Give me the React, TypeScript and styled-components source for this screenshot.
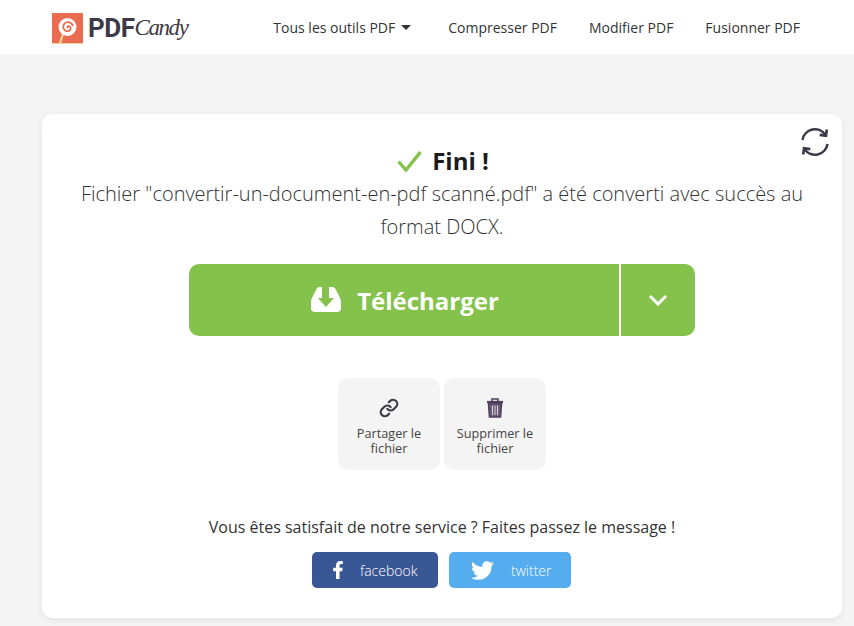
import React from "react";
import styled, { createGlobalStyle } from "styled-components";
import { FaFacebookF, FaTwitter } from "react-icons/fa";
import { Link } from "lucide-react";

const Global = createGlobalStyle`
  html, body { margin: 0; padding: 0; background: #f4f4f4; }
  body { font-family: "Open Sans", "Liberation Sans", sans-serif; color: #333; height: 626px; overflow: hidden; }
`;

const Header = styled.header`
  height: 54px; background: #fff; display: flex; align-items: center;
  padding: 0 54px 0 52px; box-sizing: border-box;
`;
const Logo = styled.div`display: flex; align-items: center; gap: 5px; height: 32px; margin-top: 2px;`;
const LogoBold = styled.span`font-family: Roboto, sans-serif; font-size: 26px; font-weight: 700; color: #3c3a47; letter-spacing: -0.5px; line-height: 32px;`;
const LogoScript = styled.span`font-family: "Liberation Serif", serif; font-style: italic; font-size: 23px; letter-spacing: -1.4px; color: #3c3a47; line-height: 32px; margin-left: -5px;`;
const Nav = styled.nav`margin-left: auto; margin-top: 2px; display: flex; align-items: center; gap: 32px;`;
const NavItem = styled.a`font-size: 14px; color: #333; line-height: 20px; display: flex; align-items: center; gap: 6px; white-space: nowrap;`;
const FirstNavItem = styled(NavItem)`margin-right: 5px;`;
const Caret = styled.span`width: 0; height: 0; border-left: 5px solid transparent; border-right: 5px solid transparent; border-top: 5px solid #333; margin-top: -1px;`;

const Page = styled.main`padding: 60px 12px 0 42px;`;
const Card = styled.section`
  position: relative; box-sizing: border-box; height: 504px; background: #fff; border-radius: 10px;
  box-shadow: 0 2px 7px rgba(0,0,0,.07); display: flex; flex-direction: column; align-items: center; padding-top: 31px;
`;
const Refresh = styled.div`position: absolute; top: 12px; right: 11px; width: 32px; height: 32px;`;
const Heading = styled.h1`margin: 0 0 0 2px; display: flex; align-items: center; gap: 10px; font-size: 24px; font-weight: 700; color: #1c1c1c; line-height: 32px;`;
const Message = styled.p`margin: 0; width: 760px; text-align: center; font-size: 20px; font-weight: 300; line-height: 33px; color: #333;`;
const DownloadRow = styled.div`display: flex; margin-top: 21px; width: 506px; height: 72px; background: #84c24b; border-radius: 10px; color: #fff;`;
const DownloadMain = styled.div`box-sizing: border-box; width: 432px; display: flex; align-items: center; justify-content: center; gap: 16px; font-size: 24px; font-weight: 700; border-right: 2px solid #fff; padding-left: 2px;`;
const DownloadMore = styled.div`flex: 1; display: flex; align-items: center; justify-content: center;`;
const Actions = styled.div`display: flex; gap: 4px; margin-top: 42px;`;
const Action = styled.div`
  box-sizing: border-box; width: 102px; height: 92px; background: #f4f4f4; border-radius: 10px;
  display: flex; flex-direction: column; align-items: center; padding-top: 19px; font-size: 12.7px; line-height: 15px; color: #444; text-align: center;
`;
const ActionIcon = styled.div`height: 21px; margin-bottom: 8px; display: flex; align-items: center; color: #3c3a47;`;
const Prompt = styled.p`margin: 46px 0 0; font-size: 16px; line-height: 22px; color: #333;`;
const Socials = styled.div`display: flex; gap: 11px; margin: 14px 1px 0 0;`;
const Social = styled.a<{ $bg: string; $w: number; $gap: number; $pad: number }>`
  box-sizing: border-box; width: ${p => p.$w}px; height: 36px; border-radius: 5px; background: ${p => p.$bg};
  color: #fff; font-size: 14px; font-weight: 300; display: flex; align-items: center; gap: ${p => p.$gap}px; padding-left: ${p => p.$pad}px;
`;

export default function App() {
  return (
    <>
      <Global />
      <Header>
        <Logo>
          <svg width="31" height="31" viewBox="0 0 31 31">
            <rect width="31" height="31" fill="#ea6c50" />
            <path d="M11 21 L8 30" stroke="#f7dfa0" strokeWidth="2" />
            <rect y="30" width="31" height="1" fill="#f3cf9a" />
            <circle cx="15.500" cy="14" r="9" fill="#fff" />
            <path d="M15.500 14.500a1.500 1.500 0 0 1 1.500-1.500 2.600 2.600 0 0 1 .2 4.800 4.300 4.300 0 0 1-6-3.800 4.600 4.600 0 0 1 4.600-4.800 5.800 5.800 0 0 1 5 3" fill="none" stroke="#ea6c50" strokeWidth="1.800" strokeLinecap="round" />
          </svg>
          <LogoBold>PDF</LogoBold>
          <LogoScript>Candy</LogoScript>
        </Logo>
        <Nav>
          <FirstNavItem>Tous les outils PDF <Caret /></FirstNavItem>
          <NavItem>Compresser PDF</NavItem>
          <NavItem>Modifier PDF</NavItem>
          <NavItem>Fusionner PDF</NavItem>
        </Nav>
      </Header>
      <Page>
        <Card>
          <Refresh>
            <svg width="32" height="32" viewBox="0 0 32 32" fill="none" stroke="#3c3a47" strokeWidth="2.600">
              <path d="M3.500 14a12.600 12.600 0 0 1 23-5" />
              <path d="M27.800 3.500 27 9.800l-6.300-.9" />
              <path d="M28.500 18a12.600 12.600 0 0 1-23 5" />
              <path d="M4.200 28.500l.8-6.300 6.300.9" />
            </svg>
          </Refresh>
          <Heading>
            <svg width="25" height="22" viewBox="0 0 25 22"><path d="M1.500 11.500 9 20 23.500 2" fill="none" stroke="#84c24b" strokeWidth="3.400" /></svg>
            Fini !
          </Heading>
          <Message>Fichier "convertir-un-document-en-pdf scanné.pdf" a été converti avec succès au format DOCX.</Message>
          <DownloadRow>
            <DownloadMain>
              <svg width="30" height="26" viewBox="0 0 30 26">
                <path d="M5 3Q6 0 9 0H11V11H7L15 20 23 11H18V0H21Q24 0 25 3L29 11Q30 13 30 15V21Q30 25 26 25H4Q0 25 0 21V15Q0 13 1 11Z" fill="#fff" />
              </svg>
              Télécharger
            </DownloadMain>
            <DownloadMore>
              <svg width="20" height="12" viewBox="0 0 20 12"><path d="M2 2l8 8 8-8" fill="none" stroke="#fff" strokeWidth="3" /></svg>
            </DownloadMore>
          </DownloadRow>
          <Actions>
            <Action>
              <ActionIcon><Link size={20} strokeWidth={2.6} /></ActionIcon>
              Partager le fichier
            </Action>
            <Action>
              <ActionIcon>
                <svg width="18" height="20" viewBox="0 0 18 20" fill="none" stroke="#4f3f5c" strokeWidth="1.600">
                  <path d="M1 4h16" strokeWidth="2.200" />
                  <path d="M6 3.500V1h6v2.500" />
                  <path d="M2.500 5.500l1 13.500h11l1-13.500z" fill="#6a5a76" />
                  <path d="M6.500 7.500v9.500M9 7.500v9.500M11.500 7.500v9.500" stroke="#dcd8de" strokeWidth="1" />
                </svg>
              </ActionIcon>
              Supprimer le fichier
            </Action>
          </Actions>
          <Prompt>Vous êtes satisfait de notre service ? Faites passez le message !</Prompt>
          <Socials>
            <Social $bg="#3a5795" $w={126} $gap={13} $pad={17}><FaFacebookF size={18} />facebook</Social>
            <Social $bg="#55acee" $w={122} $gap={17} $pad={22}><FaTwitter size={23} />twitter</Social>
          </Socials>
        </Card>
      </Page>
    </>
  );
}
